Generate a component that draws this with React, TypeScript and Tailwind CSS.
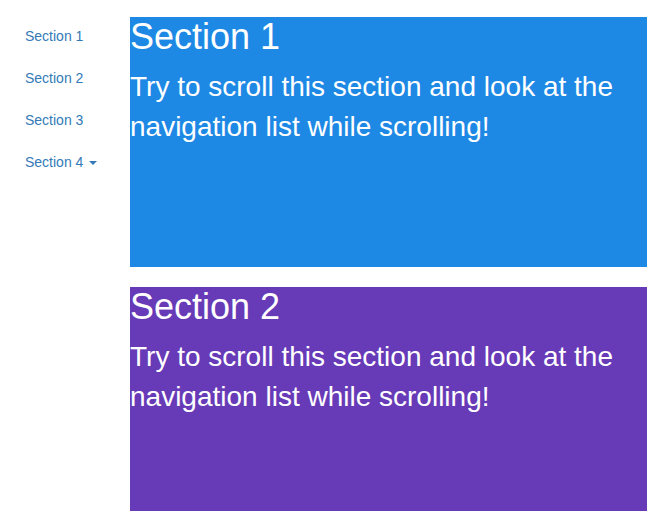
import React from 'react';

const sections = [
  { id: 'section1', title: 'Section 1', bg: 'bg-[#1e88e5]' },
  { id: 'section2', title: 'Section 2', bg: 'bg-[#673ab7]' },
];

const navItems = ['Section 1', 'Section 2', 'Section 3'];

const App = () => {
  return (
    <div className="flex items-start pl-[10px] bg-white text-white font-['Liberation_Sans',Arial,sans-serif]">
      {/* Side nav */}
      <ul className="w-[120px] mt-[16px] flex flex-col gap-[2px] text-[14px] leading-[20px] text-[#337ab7]">
        {navItems.map((label) => (
          <li key={label}>
            <a href="#" className="block px-[15px] py-[10px]">
              {label}
            </a>
          </li>
        ))}
        <li>
          <a href="#" className="flex items-center px-[15px] py-[10px]">
            Section 4
            <span className="ml-[6px] mt-[1px] w-0 h-0 border-t-[4px] border-t-[#337ab7] border-x-[4px] border-x-transparent" />
          </a>
        </li>
      </ul>

      {/* Scrolling content */}
      <div className="w-[517px] h-[494px] mt-[17px] overflow-hidden flex flex-col gap-[20px]">
        {sections.map((s) => (
          <section key={s.id} id={s.id} className={`${s.bg} h-[250px] shrink-0`}>
            <h1 className="text-[36px] leading-[1.1] mb-[10px]">{s.title}</h1>
            <p className="text-[28px] leading-[40px]">
              Try to scroll this section and look at the navigation list while scrolling!
            </p>
          </section>
        ))}
      </div>
    </div>
  );
};

export default App;
